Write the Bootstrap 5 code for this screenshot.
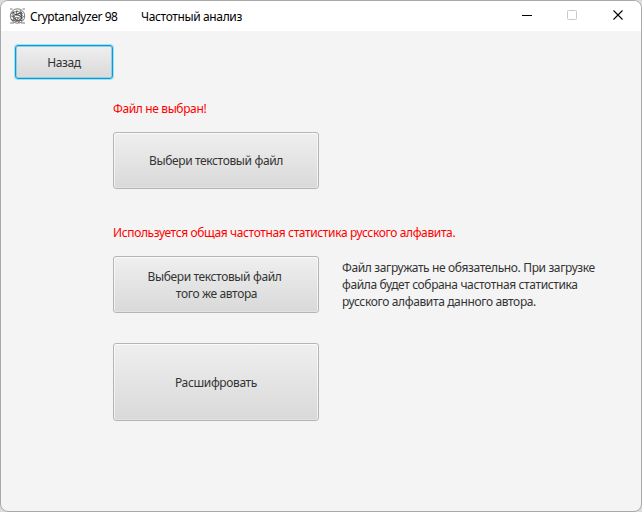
<!DOCTYPE html>
<html lang="ru">
<head>
<meta charset="utf-8">
<meta name="viewport" content="width=device-width, initial-scale=1">
<title>Cryptanalyzer 98</title>
<link href="https://cdn.jsdelivr.net/npm/bootstrap@5.3.0/dist/css/bootstrap.min.css" rel="stylesheet">
<style>
body{background:#dcdcdc;font:12px/17px "Noto Sans","Open Sans",sans-serif;letter-spacing:-.37px;color:#333;overflow:hidden}
.app-window{width:642px;height:512px;border:1px solid #a9a9a9;border-radius:8px;background:#f4f4f4}
.titlebar{height:30px;padding-left:8px;background:#fff;color:#000}
.app-title{margin-left:4px;width:111px;letter-spacing:-.45px}
.win-ctl{width:46px;height:30px}
.fx-btn{--bs-btn-padding-x:0;--bs-btn-padding-y:0;--bs-btn-font-size:12px;--bs-btn-line-height:17px;--bs-btn-color:#333;--bs-btn-border-color:#b5b5b5;--bs-btn-border-radius:3px;letter-spacing:-.37px;
width:206px;height:57px;background:linear-gradient(#efefef,#d9d9d9);box-shadow:inset 0 1px 0 #fafafa,inset 1px 0 0 rgba(255,255,255,.6),inset -1px 0 0 rgba(255,255,255,.6),inset 0 -1px 0 rgba(255,255,255,.25)}
.back-btn{--bs-btn-border-color:#039ed3;width:98px;height:34px;margin:14px 0 0 14px;box-shadow:0 0 0 1px #a8dcf0,inset 0 0 0 1px #8fcfe8}
.form-area{margin-left:112px}
.status{color:#f00;height:17px;margin-top:35px}
.status:first-child{margin-top:21px}
.status + *{margin-top:15px}
.author-btn{padding-right:3px}
.hint{margin-left:23px;padding-top:3px;width:270px}
.decrypt{height:78px;margin-top:30px}
</style>
<script src="https://cdn.jsdelivr.net/npm/bootstrap@5.3.0/dist/js/bootstrap.bundle.min.js"></script>
</head>
<body>
<div class="app-window overflow-hidden">
  <header class="titlebar d-flex align-items-center">
    <svg width="17" height="17" viewBox="0 0 17 17" fill="none" stroke="#444" stroke-width=".7">
      <circle cx="8.500" cy="8" r="7.2"/><path d="M1 1h2.500M13.500 1h2.500M1 15h4M12 15h4M2 6q6-5 12 0M2 11q6 5 12-2M5 3q-3 6 2 11M11 2q4 6-1 12M4 8q4-4 8 1t-5 3q-5-3 1-6t4 5M8 2l-1 5 5 1-4 3 2 4M3 13l5-4 5 4M3 4l4 3 6-3M2 8l4 1 2 5M10 5l5 4"/>
    </svg>
    <span class="app-title">Cryptanalyzer 98</span>
    <span class="me-auto">Частотный анализ</span>
    <span class="win-ctl"><svg class="d-block" width="46" height="30"><path d="M19 14.500h10" stroke="#000" fill="none"/></svg></span>
    <span class="win-ctl"><svg class="d-block" width="46" height="30"><rect x="18.500" y="9.500" width="9" height="9" rx="1" stroke="#c8c8c8" fill="none"/></svg></span>
    <span class="win-ctl"><svg class="d-block" width="46" height="30"><path d="M18.500 9.500l9 9m0-9l-9 9" stroke="#000" stroke-width="1.1" fill="none"/></svg></span>
  </header>
  <button type="button" class="btn fx-btn back-btn d-block">Назад</button>
  <main class="form-area">
    <div class="status">Файл не выбран!</div>
    <button type="button" class="btn fx-btn d-block">Выбери текстовый файл</button>
    <div class="status">Используется общая частотная статистика русского алфавита.</div>
    <div class="d-flex">
      <button type="button" class="btn fx-btn author-btn">Выбери текстовый файл<br><span class="ps-1">того же автора</span></button>
      <div class="hint">Файл загружать не обязательно. При загрузке<br>файла будет собрана частотная статистика<br>русского алфавита данного автора.</div>
    </div>
    <button type="button" class="btn fx-btn decrypt d-block">Расшифровать</button>
  </main>
</div>
</body>
</html>
